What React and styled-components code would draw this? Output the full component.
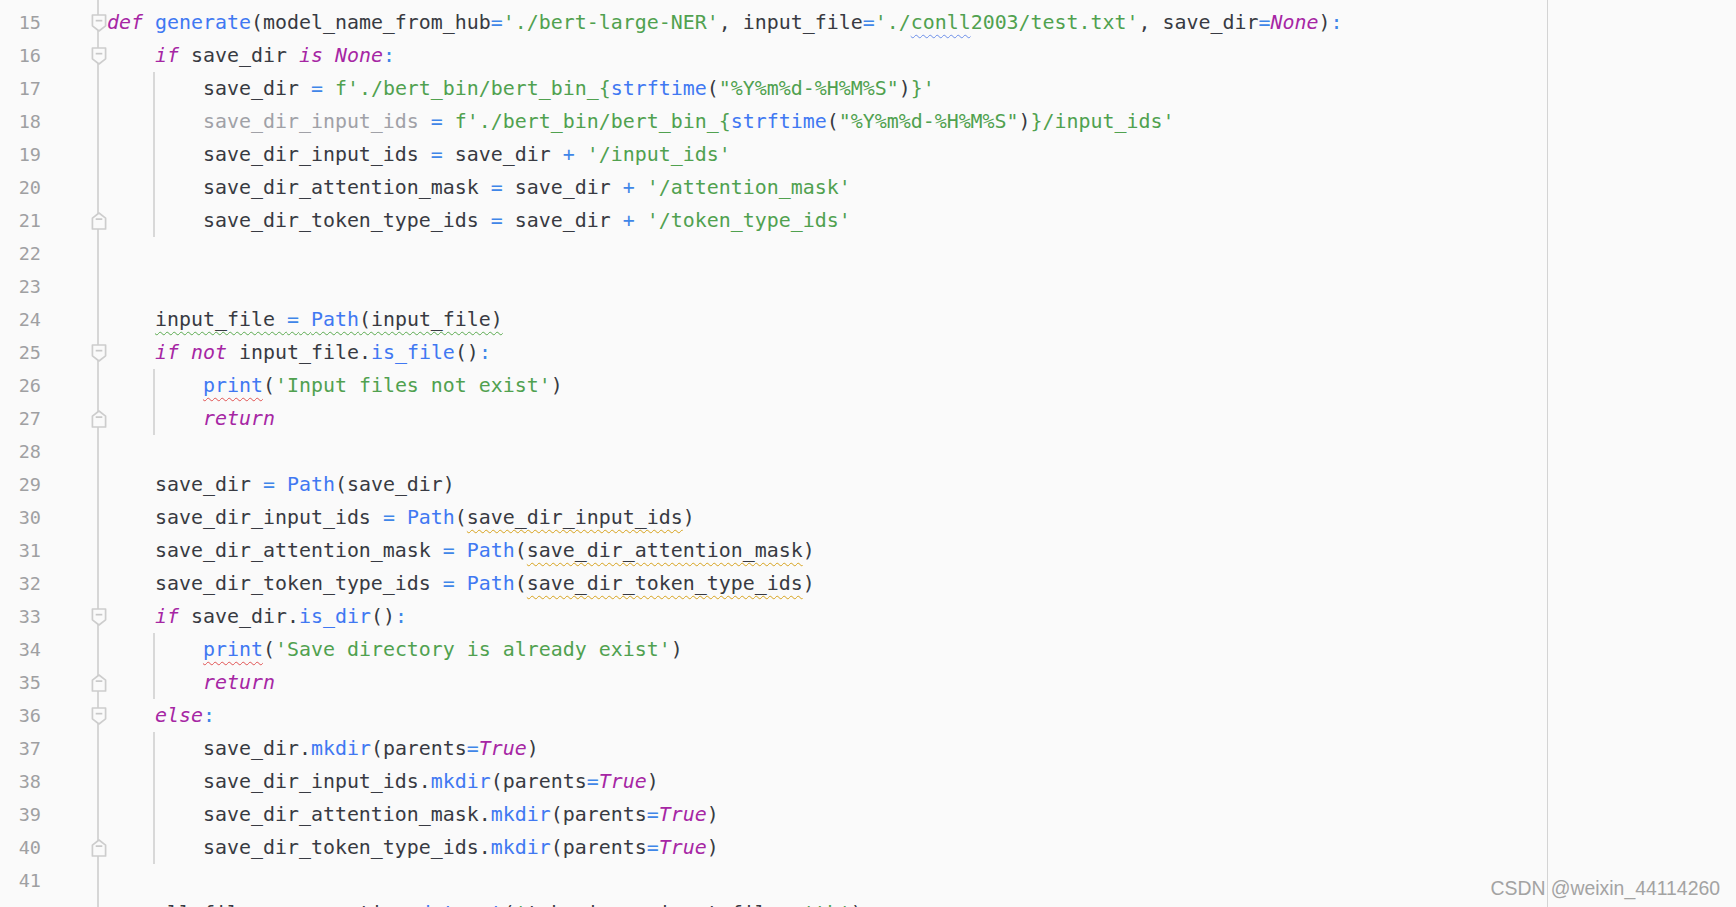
import React from "react";
import styled, { createGlobalStyle } from "styled-components";

const Global = createGlobalStyle`
  html, body { margin: 0; padding: 0; background: #fafafa; }
  body { overflow: hidden; }
`;

const Page = styled.div`
  position: relative;
  width: 1736px;
  height: 907px;
  overflow: hidden;
  background: #fafafa;
`;

const Editor = styled.div`
  display: flex;
  height: 100%;
  overflow: hidden;
`;

const Numbers = styled.div`
  width: 41px;
  flex-shrink: 0;
  padding-top: 6px;
  display: flex;
  flex-direction: column;
  overflow: hidden;
  font-family: "DejaVu Sans Mono", monospace;
  font-size: 18.5px;
  color: #9fa0a2;
  text-align: right;
`;

const NumberCell = styled.div`
  height: 33px;
  flex-shrink: 0;
  line-height: 33px;
`;

const FoldColumn = styled.div`
  width: 66px;
  flex-shrink: 0;
  padding-top: 6px;
  display: flex;
  flex-direction: column;
  overflow: hidden;
  background: linear-gradient(#d6d6d6, #d6d6d6) no-repeat 56px 0 / 2px 100%;
`;

const FoldCell = styled.div`
  height: 33px;
  flex-shrink: 0;
  display: flex;
  align-items: center;
  padding-left: 50px;
`;

const Code = styled.div`
  width: 1440px;
  flex-shrink: 0;
  border-right: 1px solid #d4d4d4;
  padding-top: 6px;
  display: flex;
  flex-direction: column;
  overflow: hidden;
  font-family: "DejaVu Sans Mono", monospace;
  font-size: 19.93px;
  color: #383a42;
  white-space: pre;
`;

const Line = styled.div`
  height: 33px;
  flex-shrink: 0;
  line-height: 33px;
  ${(p) =>
    p.$guide
      ? `background: linear-gradient(#d8d8d8, #d8d8d8) no-repeat 46px 0 / 2px 100%;`
      : ""}
`;

const Tok = styled.span`
  color: ${(p) =>
    ({
      t: "#383a42",
      k: "#a626a4",
      f: "#4078f2",
      s: "#50a14f",
      o: "#3f86e8",
      g: "#a0a1a7",
    }[p.$c] || "#383a42")};
  font-style: ${(p) => (p.$c === "k" ? "italic" : "normal")};
`;

const Wave = styled.span`
  text-decoration-line: underline;
  text-decoration-style: wavy;
  text-decoration-color: ${(p) => p.$color};
  text-decoration-thickness: 1px;
  text-underline-offset: 5px;
`;

const Watermark = styled.div`
  position: absolute;
  right: 16px;
  bottom: 7px;
  font-family: "Liberation Sans", Arial, sans-serif;
  font-size: 19.4px;
  color: #a3a3a3;
`;

const FoldIcon = ({ end }) => (
  <svg width="17" height="20" viewBox="0 0 17 20" style={{ transform: end ? "scaleY(-1)" : "none" }}>
    <path d="M1.5 1.5 H15.5 V13 L8.5 18.5 L1.5 13 Z" fill="#fafafa" stroke="#cdcdcd" strokeWidth="1.8" strokeLinejoin="round" />
    <path d={end ? "M5 12 H12" : "M5 7.5 H12"} stroke="#c8c8c8" strokeWidth="1.8" />
  </svg>
);

const T = (c, t) => ({ c, t });
const W = (color, parts) => ({ wave: color, parts });

const BLUEW = "#6b8ee8";
const RED = "#e05252";
const ORANGE = "#d6a21c";
const GREENW = "#5aaa4f";

const lines = [
  { n: 15, fold: "start", parts: [T("k", "def"), T("t", " "), T("f", "generate"), T("t", "(model_name_from_hub"), T("o", "="), T("s", "'./bert-large-NER'"), T("t", ", input_file"), T("o", "="), T("s", "'./"), W(BLUEW, [T("s", "conll")]), T("s", "2003/test.txt'"), T("t", ", save_dir"), T("o", "="), T("k", "None"), T("t", ")"), T("o", ":")] },
  { n: 16, fold: "start", parts: [T("t", "    "), T("k", "if"), T("t", " save_dir "), T("k", "is"), T("t", " "), T("k", "None"), T("o", ":")] },
  { n: 17, guide: true, parts: [T("t", "        save_dir "), T("o", "="), T("t", " "), T("s", "f'./bert_bin/bert_bin_{"), T("f", "strftime"), T("t", "("), T("s", '"%Y%m%d-%H%M%S"'), T("t", ")"), T("s", "}'")] },
  { n: 18, guide: true, parts: [T("t", "        "), T("g", "save_dir_input_ids"), T("t", " "), T("o", "="), T("t", " "), T("s", "f'./bert_bin/bert_bin_{"), T("f", "strftime"), T("t", "("), T("s", '"%Y%m%d-%H%M%S"'), T("t", ")"), T("s", "}/input_ids'")] },
  { n: 19, guide: true, parts: [T("t", "        save_dir_input_ids "), T("o", "="), T("t", " save_dir "), T("o", "+"), T("t", " "), T("s", "'/input_ids'")] },
  { n: 20, guide: true, parts: [T("t", "        save_dir_attention_mask "), T("o", "="), T("t", " save_dir "), T("o", "+"), T("t", " "), T("s", "'/attention_mask'")] },
  { n: 21, guide: true, fold: "end", parts: [T("t", "        save_dir_token_type_ids "), T("o", "="), T("t", " save_dir "), T("o", "+"), T("t", " "), T("s", "'/token_type_ids'")] },
  { n: 22, parts: [] },
  { n: 23, parts: [] },
  { n: 24, parts: [T("t", "    "), W(GREENW, [T("t", "input_file "), T("o", "="), T("t", " "), T("f", "Path"), T("t", "(input_file)")])] },
  { n: 25, fold: "start", parts: [T("t", "    "), T("k", "if"), T("t", " "), T("k", "not"), T("t", " input_file."), T("f", "is_file"), T("t", "()"), T("o", ":")] },
  { n: 26, guide: true, parts: [T("t", "        "), W(RED, [T("f", "print")]), T("t", "("), T("s", "'Input files not exist'"), T("t", ")")] },
  { n: 27, guide: true, fold: "end", parts: [T("t", "        "), T("k", "return")] },
  { n: 28, parts: [] },
  { n: 29, parts: [T("t", "    save_dir "), T("o", "="), T("t", " "), T("f", "Path"), T("t", "(save_dir)")] },
  { n: 30, parts: [T("t", "    save_dir_input_ids "), T("o", "="), T("t", " "), T("f", "Path"), T("t", "("), W(ORANGE, [T("t", "save_dir_input_ids")]), T("t", ")")] },
  { n: 31, parts: [T("t", "    save_dir_attention_mask "), T("o", "="), T("t", " "), T("f", "Path"), T("t", "("), W(ORANGE, [T("t", "save_dir_attention_mask")]), T("t", ")")] },
  { n: 32, parts: [T("t", "    save_dir_token_type_ids "), T("o", "="), T("t", " "), T("f", "Path"), T("t", "("), W(ORANGE, [T("t", "save_dir_token_type_ids")]), T("t", ")")] },
  { n: 33, fold: "start", parts: [T("t", "    "), T("k", "if"), T("t", " save_dir."), T("f", "is_dir"), T("t", "()"), T("o", ":")] },
  { n: 34, guide: true, parts: [T("t", "        "), W(RED, [T("f", "print")]), T("t", "("), T("s", "'Save directory is already exist'"), T("t", ")")] },
  { n: 35, guide: true, fold: "end", parts: [T("t", "        "), T("k", "return")] },
  { n: 36, fold: "start", parts: [T("t", "    "), T("k", "else"), T("o", ":")] },
  { n: 37, guide: true, parts: [T("t", "        save_dir."), T("f", "mkdir"), T("t", "(parents"), T("o", "="), T("k", "True"), T("t", ")")] },
  { n: 38, guide: true, parts: [T("t", "        save_dir_input_ids."), T("f", "mkdir"), T("t", "(parents"), T("o", "="), T("k", "True"), T("t", ")")] },
  { n: 39, guide: true, parts: [T("t", "        save_dir_attention_mask."), T("f", "mkdir"), T("t", "(parents"), T("o", "="), T("k", "True"), T("t", ")")] },
  { n: 40, guide: true, fold: "end", parts: [T("t", "        save_dir_token_type_ids."), T("f", "mkdir"), T("t", "(parents"), T("o", "="), T("k", "True"), T("t", ")")] },
  { n: 41, parts: [] },
  { n: 42, parts: [T("t", "    all_file = generation_"), T("f", "dataset"), T("t", "("), T("s", "'"), T("t", "tokenizer, input_file, "), T("s", "'tk'"), T("t", ")")] },
];

const renderParts = (parts) =>
  parts.map((p, i) =>
    p.wave ? (
      <Wave key={i} $color={p.wave}>
        {renderParts(p.parts)}
      </Wave>
    ) : (
      <Tok key={i} $c={p.c}>
        {p.t}
      </Tok>
    )
  );

export default function App() {
  return (
    <>
      <Global />
      <Page>
        <Editor>
          <Numbers>
            {lines.map((l) => (
              <NumberCell key={l.n}>{l.n}</NumberCell>
            ))}
          </Numbers>
          <FoldColumn>
            {lines.map((l) => (
              <FoldCell key={l.n}>{l.fold ? <FoldIcon end={l.fold === "end"} /> : null}</FoldCell>
            ))}
          </FoldColumn>
          <Code>
            {lines.map((l) => (
              <Line key={l.n} $guide={l.guide}>
                {renderParts(l.parts)}
              </Line>
            ))}
          </Code>
        </Editor>
        <Watermark>CSDN @weixin_44114260</Watermark>
      </Page>
    </>
  );
}
